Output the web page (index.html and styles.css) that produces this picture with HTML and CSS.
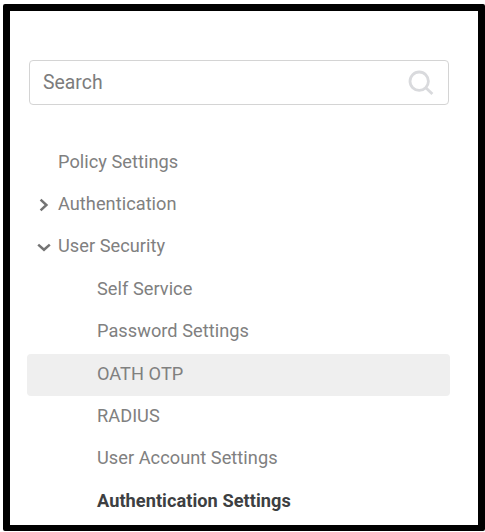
FILE: index.html
```html
<!DOCTYPE html>
<html lang="en">
<head>
<meta charset="utf-8">
<title>Policy Settings</title>
<link rel="stylesheet" href="styles.css">
</head>
<body>
<main class="panel">
  <label class="search">
    <input class="search-input" type="text" placeholder="Search" aria-label="Search">
    <svg class="search-icon" viewBox="0 0 26 26" aria-hidden="true"><circle cx="11.2" cy="11.2" r="9.2"/><path d="M17.8 17.8L24.4 24"/></svg>
  </label>
  <nav class="tree">
    <a class="row"><span class="label">Policy Settings</span></a>
    <a class="row"><svg class="arrow" viewBox="0 0 14 14" aria-hidden="true"><path d="M3.6 1.6L9.4 7L3.6 12.4"/></svg><span class="label">Authentication</span></a>
    <a class="row"><svg class="arrow" viewBox="0 0 14 14" aria-hidden="true"><path d="M1.2 4.6L7 9.8L12.8 4.6"/></svg><span class="label">User Security</span></a>
    <a class="row child">Self Service</a>
    <a class="row child">Password Settings</a>
    <a class="row child hovered">OATH OTP</a>
    <a class="row child">RADIUS</a>
    <a class="row child">User Account Settings</a>
    <a class="row child current">Authentication Settings</a>
  </nav>
</main>
</body>
</html>
```
FILE: styles.css
```css
* { box-sizing: border-box; }
body {
  margin: 0;
  background: #fff;
  font-family: Roboto, "Liberation Sans", sans-serif;
  font-size: 18.2px;
  letter-spacing: 0.04px;
  color: #808080;
}
.panel {
  width: 482px;
  height: 527px;
  margin: 4px 0 0 3px;
  padding: 49px 0 0 17px;
  border: 7px solid #000;
  border-bottom-width: 6px;
  border-radius: 2px;
  overflow: hidden;
}
.search {
  display: flex;
  align-items: center;
  width: 420px;
  height: 45px;
  margin-left: 2px;
  padding: 0 14px 0 13px;
  border: 1.5px solid #d4d4d4;
  border-radius: 4px;
}
.search-input {
  flex: 1;
  min-width: 0;
  padding: 0 0 1px;
  border: 0;
  outline: 0;
  background: none;
  font: inherit;
  font-size: 19.4px;
  color: #7c7c7c;
}
.search-input::placeholder { color: #7c7c7c; opacity: 1; }
.search-icon {
  width: 26px;
  height: 26px;
  fill: none;
  stroke: #d9dadd;
  stroke-width: 2.8;
}
.tree {
  display: flex;
  flex-direction: column;
  width: 423px;
  margin-top: 37px;
}
.row {
  display: grid;
  grid-template-columns: 14px 1fr;
  column-gap: 7px;
  align-items: center;
  height: 42.4px;
  padding: 0 0 3px 10px;
  border-radius: 4px;
  line-height: 22px;
  white-space: nowrap;
}
.label { grid-column: 2; }
.arrow {
  width: 14px;
  height: 14px;
  margin-top: 1px;
  fill: none;
  stroke: #747474;
  stroke-width: 2.5;
}
.child { display: flex; padding-left: 70px; }
.hovered { background: #efefef; }
.current { color: #3d3f42; font-weight: 700; }
```
